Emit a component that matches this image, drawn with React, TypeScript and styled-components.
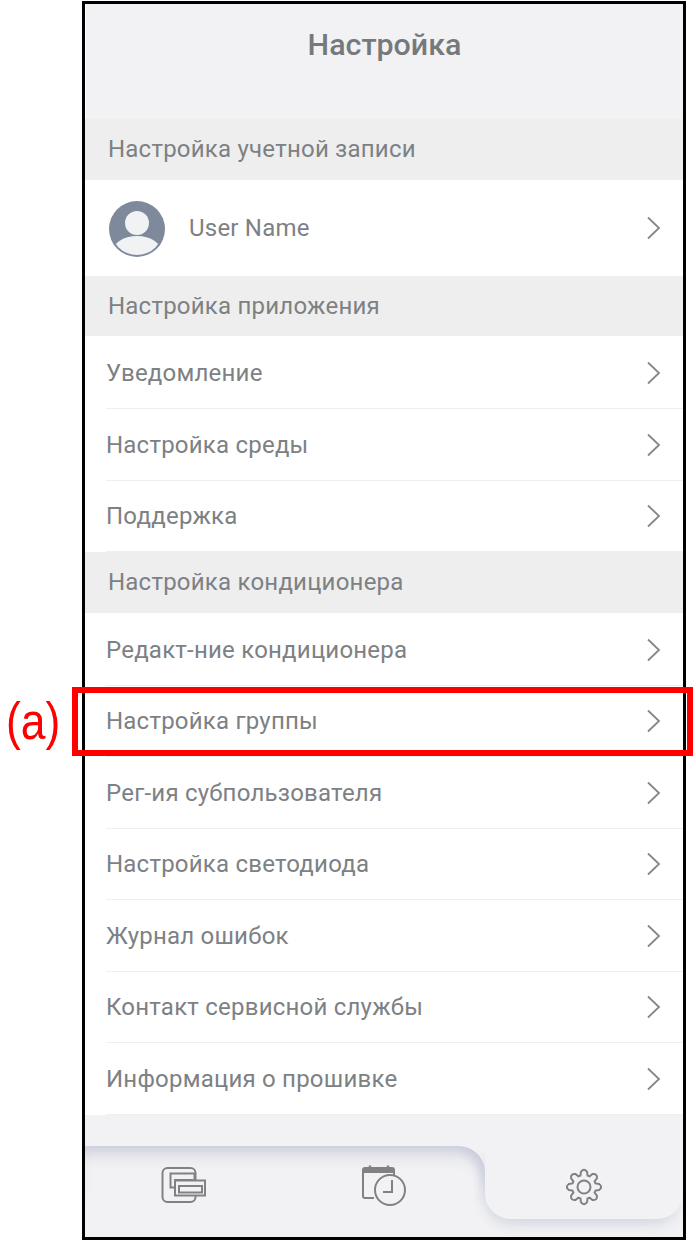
import React from "react";
import styled, { createGlobalStyle } from "styled-components";

const GlobalStyle = createGlobalStyle`
  html, body {
    margin: 0;
    padding: 0;
    background: #fff;
  }
  body {
    font-family: Roboto, "Liberation Sans", sans-serif;
    width: 696px;
    height: 1243px;
    overflow: hidden;
  }
`;

const Page = styled.div`
  position: relative;
  width: 696px;
  height: 1243px;
  padding: 1px 0 0 82px;
  box-sizing: border-box;
`;

const Phone = styled.div`
  width: 604px;
  height: 1239px;
  box-sizing: border-box;
  border: 3px solid #000;
  display: flex;
  flex-direction: column;
  background: #fff;
  overflow: hidden;
`;

const Header = styled.header`
  height: 115px;
  flex: none;
  background: #f2f2f4;
  display: flex;
  justify-content: center;
  padding-top: 23px;
  box-sizing: border-box;
  font-size: 30.4px;
  line-height: 36px;
  font-weight: 500;
  color: #76797c;
  margin-left: 1px;
`;

const SectionTitle = styled.div`
  height: 60.5px;
  flex: none;
  box-sizing: border-box;
  padding: 0 0 0 23px;
  display: flex;
  align-items: center;
  background: #eeeeee;
  color: #7d8184;
  font-size: 24px;
  letter-spacing: 0.22px;
`;

const RowGroup = styled.div`
  padding-top: 1.5px;
  flex: none;
`;

const Row = styled.div<{ $tall?: boolean }>`
  height: ${(p) => (p.$tall ? "96px" : "71.5px")};
  flex: none;
  box-sizing: border-box;
  margin-left: 21px;
  padding: ${(p) => (p.$tall ? "2px" : "1px")} 21px 0 0;
  display: flex;
  align-items: center;
  color: #7d8184;
  font-size: 24px;
  letter-spacing: 0.22px;
  border-bottom: 1px solid ${(p) => (p.$tall ? "transparent" : "#efefef")};
`;

const RowLabel = styled.span`
  flex: 1;
`;

const Avatar = styled.svg`
  width: 58px;
  height: 58px;
  margin: 2px 23px 0 2px;
  flex: none;
`;

const Chevron = styled.svg`
  width: 16px;
  height: 24px;
  flex: none;
`;

const Footer = styled.footer`
  flex: 1;
  background: #f2f2f4;
  display: flex;
  padding-top: 31px;
  overflow: hidden;
`;

const TabGroup = styled.div`
  position: relative;
  width: 400px;
  flex: none;
  display: flex;
  align-items: flex-start;
  padding: 19px 0 0 76px;
  box-sizing: border-box;
  gap: 154px;
  margin-bottom: -10px;

  &::before {
    content: "";
    position: absolute;
    inset: 0;
    border-top-right-radius: 26px;
    box-shadow:
      inset 0 16px 18px -10px #c9ccda,
      inset -12px 8px 12px -10px #c6c9d8;
    mask-image: linear-gradient(#000 30%, transparent 62%);
  }
`;

const ActiveTab = styled.div`
  flex: 1;
  height: 73px;
  display: flex;
  justify-content: center;
  padding-top: 18px;
  box-sizing: border-box;
  background: #f2f2f4;
  border-radius: 0 0 26px 26px;
  box-shadow: -2px 8px 14px -4px #cfd2df;
  position: relative;
`;

const TabIcon = styled.svg`
  width: 46px;
  height: 46px;
  fill: none;
  stroke: #808184;
  stroke-width: 2;
  flex: none;
  position: relative;
`;

const Highlight = styled.div`
  position: absolute;
  left: 72px;
  top: 687px;
  width: 621px;
  height: 69px;
  box-sizing: border-box;
  border: 6px solid #ff0000;
`;

const Marker = styled.div`
  position: absolute;
  left: 6px;
  top: 692px;
  font-family: "Liberation Sans", Arial, sans-serif;
  font-size: 44.5px;
  line-height: 60px;
  color: #ff0000;
  transform: scaleY(1.15);
`;

const ChevronIcon = () => (
  <Chevron viewBox="0 0 16 24">
    <path d="M2 1.5 L13 12 L2 22.5" fill="none" stroke="#84878a" strokeWidth="1.8" />
  </Chevron>
);

const SettingRow = ({ label }: { label: string }) => (
  <Row>
    <RowLabel>{label}</RowLabel>
    <ChevronIcon />
  </Row>
);

const appRows = ["Уведомление", "Настройка среды", "Поддержка"];
const acRows = [
  "Редакт-ние кондиционера",
  "Настройка группы",
  "Рег-ия субпользователя",
  "Настройка светодиода",
  "Журнал ошибок",
  "Контакт сервисной службы",
  "Информация о прошивке",
];

// gear outline built from 8 teeth
const gearPath = () => {
  const pts: string[] = [];
  const n = 8;
  for (let i = 0; i < n; i++) {
    const a = (i / n) * Math.PI * 2 - Math.PI / 2;
    const p = (r: number, d: number) =>
      `${(23 + r * Math.cos(a + d)).toFixed(2)} ${(23 + r * Math.sin(a + d)).toFixed(2)}`;
    pts.push(
      `${i === 0 ? "M" : "L"}${p(12, -0.3)}`,
      `L${p(15.5, -0.2)}`,
      `Q${p(19.2, 0)} ${p(15.5, 0.2)}`,
      `L${p(12, 0.3)}`
    );
  }
  return pts.join(" ") + " Z";
};

const App = () => (
  <>
    <GlobalStyle />
    <Page>
      <Phone>
        <Header>Настройка</Header>
        <SectionTitle>Настройка учетной записи</SectionTitle>
        <Row $tall>
          <Avatar viewBox="0 0 58 58">
            <defs>
              <clipPath id="avatar-clip">
                <circle cx="29" cy="29" r="26" />
              </clipPath>
            </defs>
            <circle cx="29" cy="29" r="28" fill="#7e8a9b" />
            <circle cx="29" cy="23" r="12" fill="#f0f2f4" />
            <ellipse cx="29" cy="53" rx="25" ry="17" fill="#f0f2f4" clipPath="url(#avatar-clip)" />
          </Avatar>
          <RowLabel>User Name</RowLabel>
          <ChevronIcon />
        </Row>
        <SectionTitle>Настройка приложения</SectionTitle>
        <RowGroup>
          {appRows.map((label) => (
            <SettingRow key={label} label={label} />
          ))}
        </RowGroup>
        <SectionTitle>Настройка кондиционера</SectionTitle>
        <RowGroup>
          {acRows.map((label) => (
            <SettingRow key={label} label={label} />
          ))}
        </RowGroup>
        <Footer>
          <TabGroup>
            <TabIcon viewBox="0 0 46 46">
              <rect x="1.5" y="3" width="33" height="34" rx="5" />
              <rect x="9.5" y="8.5" width="24" height="14" fill="#f2f2f4" />
              <rect x="14" y="15" width="17" height="5" />
              <rect x="14" y="15.5" width="30" height="15" fill="#f2f2f4" />
              <rect x="18" y="21" width="23" height="6.5" />
            </TabIcon>
            <TabIcon viewBox="0 2 46 46">
              <path d="M13 35 H4 a2 2 0 0 1 -2 -2 V7 a2 2 0 0 1 2 -2 H31 a2 2 0 0 1 2 2 V12" />
              <path d="M2 8 H33" strokeWidth="4" />
              <path d="M9 2.5 V6 M27 2.5 V6" strokeWidth="2.5" />
              <circle cx="29" cy="27" r="15" />
              <path d="M31 17 V29 H22" />
            </TabIcon>
          </TabGroup>
          <ActiveTab>
            <TabIcon viewBox="0 0 46 46">
              <path d={gearPath()} />
              <circle cx="23" cy="23" r="6.5" />
            </TabIcon>
          </ActiveTab>
        </Footer>
      </Phone>
      <Highlight />
      <Marker>(a)</Marker>
    </Page>
  </>
);

export default App;
